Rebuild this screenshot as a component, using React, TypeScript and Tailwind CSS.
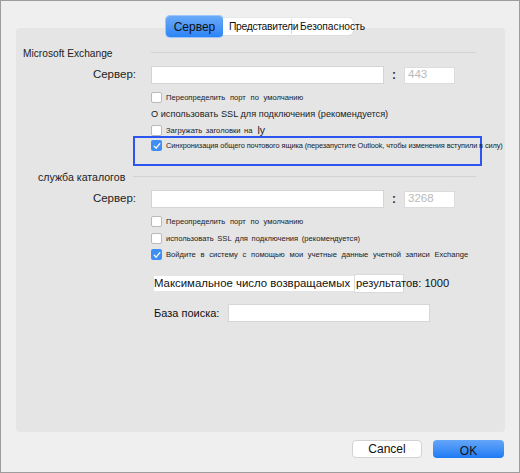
import React from 'react';

const font = { fontFamily: '"Liberation Sans", Arial, sans-serif' };

const Check: React.FC<{ checked?: boolean }> = ({ checked }) =>
    checked ? (
        <span className="flex h-[11px] w-[11px] shrink-0 items-center justify-center rounded-[2px] bg-[#3d8ff6]">
            <svg width="8" height="8" viewBox="0 0 8 8" fill="none">
                <path d="M1.3 4.3 L3.2 6.2 L6.8 1.6" stroke="white" strokeWidth="1.3" strokeLinecap="round" strokeLinejoin="round" />
            </svg>
        </span>
    ) : (
        <span className="block h-[11px] w-[11px] shrink-0 rounded-[2px] border border-[#b9b9b9] bg-white" />
    );

const CheckRow: React.FC<{ checked?: boolean; children: React.ReactNode; className?: string; spacing?: string }> = ({ checked, children, className, spacing }) => (
    <div className={`flex h-[11px] items-center pl-[135px] ${className ?? ''}`}>
        <Check checked={checked} />
        <span className={`ml-[4px] whitespace-nowrap text-[7.6px] leading-none text-[#1a1a1a] ${spacing ?? '[word-spacing:2.6px]'}`}>{children}</span>
    </div>
);

const ServerRow: React.FC<{ port: string; className?: string }> = ({ port, className }) => (
    <div className={`flex h-[18px] items-center ${className ?? ''}`}>
        <span className="w-[120px] text-right text-[11.5px] text-[#222]">Сервер:</span>
        <input className="ml-[15px] h-[18px] w-[233px] border border-[#d4d4d4] bg-white outline-none" />
        <span className="w-[20px] text-center text-[12px] font-bold text-[#333]">:</span>
        <input
            placeholder={port}
            className="h-[17px] w-[51px] border border-[#dcdcdc] bg-white px-[3px] text-[11.5px] outline-none placeholder:text-[#b9b9b9]"
        />
    </div>
);

const SectionHead: React.FC<{ title: string; textClass: string; lineLeft: string; className?: string }> = ({ title, textClass, lineLeft, className }) => (
    <div className={`relative flex h-[13px] items-center ${className ?? ''}`}>
        <span className={`${textClass} whitespace-nowrap text-[#222]`}>{title}</span>
        <span className={`absolute ${lineLeft} right-[29px] top-[5px] h-px bg-[#d2d2d2]`} />
    </div>
);

export default function App() {
    return (
        <div style={font} className="flex h-[473px] w-[520px] flex-col border border-[#9d9d9d] bg-[#efefef]">
            {/* segmented tabs */}
            <div className="relative z-10 mt-[15px] flex h-[21px] items-center pl-[165px]">
                <div className="flex h-[21px] w-[57px] items-center justify-center rounded-[4px] bg-gradient-to-b from-[#6aaaf8] to-[#2a84f6] text-[12px] text-[#111] shadow-[0_0_0_1px_#9cc6fb]">
                    Сервер
                </div>
                <div className="flex h-[17px] items-center rounded-r-[4px] bg-white shadow-[0_0_1px_rgba(0,0,0,0.3)]">
                    <span className="w-[69px] whitespace-nowrap border-r border-[#dadada] pl-[6px] text-[10.3px] tracking-[-0.3px] text-[#111]">Представители</span>
                    <span className="w-[61px] whitespace-nowrap pl-[8px] text-[10.2px] text-[#111]">Безопасность</span>
                </div>
            </div>

            <div className="-mt-[9px] ml-[15px] flex h-[404px] w-[489px] flex-col rounded-[4px] bg-[#e5e5e5]">
                <SectionHead title="Microsoft Exchange" textClass="pl-[7px] text-[10.2px]" lineLeft="left-[135px]" className="mt-[19px]" />
                <ServerRow port="443" className="mt-[6px]" />
                <CheckRow className="mt-[8px]">Переопределить порт по умолчанию</CheckRow>
                <div className="mt-[6px] flex h-[12px] items-center pl-[135px] text-[9.2px] text-[#1a1a1a]">
                    О использовать SSL для подключения (рекомендуется)
                </div>
                <div className="mt-[4px] flex h-[11px] items-center pl-[135px]">
                    <Check />
                    <span className="ml-[4px] text-[7.6px] leading-none text-[#1a1a1a] [word-spacing:1.5px]">Загружать заголовки на</span>
                    <span className="ml-[5px] text-[10.5px] leading-none text-[#1a1a1a]">ly</span>
                </div>
                <div className="ml-[117px] h-[30px] w-[349px] border-2 border-[#2d55f0] pl-[16px] pt-[2px]">
                    <div className="flex items-center">
                        <Check checked />
                        <span className="ml-[4px] whitespace-nowrap text-[7.4px] leading-none tracking-[-0.1px] text-[#1a1a1a]">
                            Синхронизация общего почтового ящика (перезапустите Outlook, чтобы изменения вступили в силу)
                        </span>
                    </div>
                </div>

                <SectionHead title="служба каталогов" textClass="pl-[22px] text-[10.6px]" lineLeft="left-[117px]" className="mt-[5px]" />
                <ServerRow port="3268" className="mt-[6px]" />
                <CheckRow className="mt-[8px]">Переопределить порт по умолчанию</CheckRow>
                <CheckRow className="mt-[6px]" spacing="[word-spacing:1.5px]">использовать SSL для подключения (рекомендуется)</CheckRow>
                <CheckRow checked className="mt-[5px]">
                    Войдите в систему с помощью мои учетные данные учетной записи Exchange
                </CheckRow>

                <div className="relative mt-[14px] flex h-[19px] items-center pl-[138px]">
                    <span className="absolute left-[338px] top-0 h-[19px] w-[50px] border border-[#dadada] bg-white" />
                    <span className="relative w-[200px] whitespace-nowrap bg-white text-[11.4px] leading-[15px] text-[#111]">Максимальное число возвращаемых</span>
                    <span className="relative whitespace-pre pl-[2px] text-[11.2px] text-[#111]">результатов: 1000</span>
                </div>

                <div className="mt-[11px] flex h-[18px] items-center pl-[138px]">
                    <span className="w-[74px] whitespace-nowrap text-[11px] text-[#111]">База поиска:</span>
                    <input className="h-[18px] w-[202px] border border-[#d6d6d6] bg-white outline-none" />
                </div>
            </div>

            <div className="mt-[8px] flex justify-end gap-[11px] pr-[15px]">
                <button className="h-[18px] w-[70px] rounded-[4px] border border-[#d2d2d2] bg-white text-[12px] leading-none text-[#111]">
                    Cancel
                </button>
                <button className="h-[18px] w-[71px] rounded-[4px] bg-gradient-to-b from-[#63a6f8] to-[#1c7af5] pt-[3px] text-[12px] leading-none text-[#111]">
                    OK
                </button>
            </div>
        </div>
    );
}
